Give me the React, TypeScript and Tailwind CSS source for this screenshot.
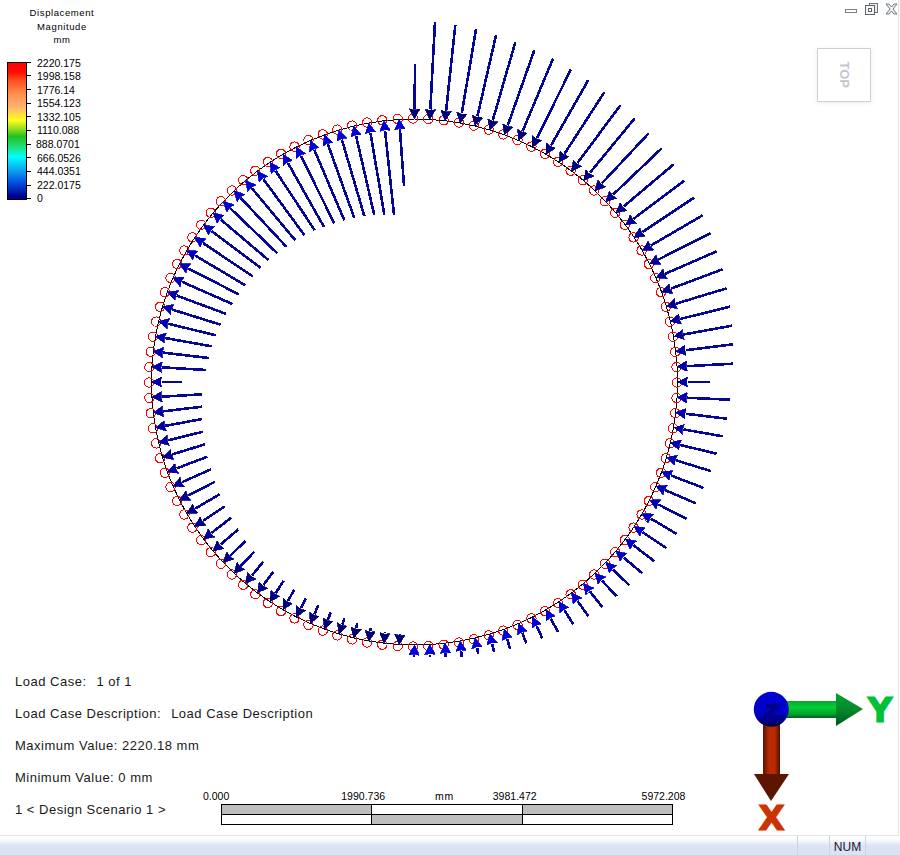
import React from 'react';

// arrow tails, clockwise from the top node of the ring
const TAILS: [number, number][] = [
  [415, 64], [435, 21.7], [455.3, 25.3], [476, 29.3], [496, 35.3], [515.3, 42.3], [534.3, 50.3], [553, 58.7], [571, 69.3],
  [588.3, 80], [604.3, 92.3], [620.3, 105.3], [634.7, 118.3], [648.7, 133.3], [661.7, 148.3], [673.7, 164.3], [684.3, 180.7],
  [694, 197.7], [702.7, 215.3], [710.7, 233.3], [716.7, 251.3], [722.7, 269.3], [726.7, 288.3], [730, 306.7], [732, 325.7],
  [733, 344.3], [733, 363.7], [709.7, 382], [730, 399.7], [726.7, 418.7], [722.7, 436.3], [716.7, 453.7], [710.7, 471],
  [703.7, 488], [695.7, 503.3], [686.7, 518.7], [676.7, 534], [666.3, 548], [654.3, 561.3], [642.3, 573.3], [629.3, 585.3],
  [616.7, 596.3], [602.3, 607], [588.3, 616], [573.3, 624.3], [558, 632], [542.3, 638.3], [526.3, 643.3], [510, 648.7],
  [494, 652], [478.3, 654.3], [461.7, 656.7], [445.7, 656.7], [430, 656.7], [414, 656.7], [400, 634.3], [385, 632.3],
  [370.7, 628.3], [357.3, 623.3], [344.3, 618.3], [330.7, 612.3], [318.3, 605.3], [306, 598.3], [294.3, 589.7], [283.7, 580.7],
  [273.3, 571.7], [263.3, 561.7], [254.3, 551.7], [245.7, 540.7], [238.3, 529.3], [231.3, 517.7], [224.7, 506.3], [219.7, 494.3],
  [215, 481.7], [211, 469.3], [207.3, 456.7], [205, 444.3], [203.3, 431.7], [202.3, 419], [202, 406.7], [202.3, 394.3],
  [181.7, 382], [205.7, 370], [208.7, 358], [211.7, 346.3], [215.7, 335.3], [220.7, 324.7], [226.3, 314], [232.3, 304],
  [238.7, 294.3], [245.3, 285.3], [252.7, 276.3], [260.7, 268], [268.7, 260.3], [277.3, 253.3], [286.3, 246.7], [295.3, 240.3],
  [304.3, 235], [314.7, 230.3], [324, 227], [334.3, 223.3], [344.3, 220.3], [354.3, 218], [364.3, 216], [374.3, 215.3],
  [384.3, 214.7], [394, 214.7], [404, 185.7],
];

const LEGEND = ['2220.175', '1998.158', '1776.14', '1554.123', '1332.105', '1110.088', '888.0701', '666.0526', '444.0351', '222.0175', '0'];

const ring = TAILS.map((_, i) => {
  const a = (i * Math.PI * 2) / TAILS.length;
  return { sin: Math.sin(a), cos: Math.cos(a) };
});

const Ring = () => (
  <svg className="absolute inset-0" width={899} height={835} shapeRendering="crispEdges">
    <polygon
      points={ring.map((p) => `${414.5 + 263 * p.sin},${382 - 263 * p.cos}`).join(' ')}
      fill="none"
      stroke="#000"
      strokeWidth={1}
    />
    {ring.map((p, i) => (
      <circle key={i} cx={413 + 264 * p.sin} cy={382.5 - 264 * p.cos} r={4.7} fill="none" stroke="#ff0000" strokeWidth={1} />
    ))}
    {ring.map((p, i) => {
      const tip = [414.5 + 263 * p.sin, 382 - 263 * p.cos];
      const [tx, ty] = TAILS[i];
      const len = Math.hypot(tip[0] - tx, tip[1] - ty);
      const ux = (tip[0] - tx) / len;
      const uy = (tip[1] - ty) / len;
      const bx = tip[0] - ux * 10;
      const by = tip[1] - uy * 10;
      const blue = Math.round(170 - uy * 50);
      return (
        <g key={i}>
          <line x1={tx} y1={ty} x2={bx} y2={by} stroke="#050596" strokeWidth={2.6} />
          <polygon
            points={`${tip[0]},${tip[1]} ${bx - uy * 5.2},${by + ux * 5.2} ${bx + ux * 1},${by + uy * 1} ${bx + uy * 5.2},${by - ux * 5.2}`}
            fill={`rgb(0,0,${blue})`}
            stroke={`rgb(0,0,${blue})`}
            strokeWidth={0.8}
          />
        </g>
      );
    })}
  </svg>
);

const Legend = () => (
  <div className="w-[125px] pl-[7px]">
    <div className="w-[110px] pt-[6px] text-center text-[9.5px] leading-[13.5px] tracking-[0.6px] text-black">
      <div>Displacement</div>
      <div>Magnitude</div>
      <div>mm</div>
    </div>
    <div className="mt-[10px] flex items-center">
      <div className="h-[138px] w-[20px] border border-black bg-[linear-gradient(to_bottom,#ff0000_0%,#ff1000_7%,#ff5020_13%,#ff9050_23%,#ffb070_32%,#ffff20_42%,#a0e020_48%,#20c020_54%,#20e080_62%,#00ffff_69%,#10a0f0_79%,#0050e0_88%,#000090_98%)]" />
      <div className="flex h-[138px] w-[4px] flex-col justify-between">
        {LEGEND.map((v) => (
          <div key={v} className="h-px bg-black" />
        ))}
      </div>
      <div className="ml-[6px] flex h-[148px] flex-col justify-between text-[10.5px] leading-[12px] text-black">
        {LEGEND.map((v) => (
          <div key={v} className={v === '888.0701' ? '-ml-px' : ''}>{v}</div>
        ))}
      </div>
    </div>
  </div>
);

const WindowButtons = () => (
  <svg width={56} height={16} viewBox="0 0 56 16" className="mt-[1px]">
    <rect x={3.5} y={8.5} width={11} height={3} fill="#fff" stroke="#7b8087" />
    <rect x={27.5} y={2.5} width={8} height={9} fill="#e8ecf0" stroke="#6f747b" />
    <rect x={23.5} y={4.5} width={9} height={9} fill="#f4f6f8" stroke="#5f646b" />
    <rect x={26.5} y={7.5} width={3} height={3} fill="#fff" stroke="#5f646b" />
    <path d="M44 3h3l2.5 3 2.5-3h3l-4 5 4 5h-3l-2.5-3-2.5 3h-3l4-5z" fill="#f2f4f6" stroke="#6f747b" strokeWidth={1} />
  </svg>
);

const Triad = () => (
  <svg width={149} height={150} viewBox="750 685 149 150" className="ml-auto shrink-0 overflow-visible">
    <defs>
      <linearGradient id="gShaft" x1="0" y1="0" x2="0" y2="1">
        <stop offset="0" stopColor="#07a52f" />
        <stop offset="0.35" stopColor="#02d035" />
        <stop offset="0.75" stopColor="#03a62c" />
        <stop offset="1" stopColor="#045f1c" />
      </linearGradient>
      <linearGradient id="gHead" x1="0" y1="0" x2="0" y2="1">
        <stop offset="0" stopColor="#03a232" />
        <stop offset="0.5" stopColor="#048a2a" />
        <stop offset="1" stopColor="#03551a" />
      </linearGradient>
      <linearGradient id="rShaft" x1="0" y1="0" x2="1" y2="0">
        <stop offset="0" stopColor="#5a1204" />
        <stop offset="0.35" stopColor="#b82a00" />
        <stop offset="0.7" stopColor="#b82a00" />
        <stop offset="1" stopColor="#4e1004" />
      </linearGradient>
      <linearGradient id="ball" x1="0" y1="0" x2="0" y2="1">
        <stop offset="0" stopColor="#0000d8" />
        <stop offset="0.7" stopColor="#0000c0" />
        <stop offset="0.88" stopColor="#000070" />
        <stop offset="1" stopColor="#00003c" />
      </linearGradient>
    </defs>
    <rect x={787} y={701} width={51} height={17} fill="url(#gShaft)" />
    <polygon points="837,693 837,726 864,709" fill="url(#gHead)" />
    <rect x={764} y={724} width={17} height={52} fill="url(#rShaft)" />
    <polygon points="755,774 790,774 772,801" fill="#5c1500" />
    <circle cx={772.3} cy={709.3} r={17.5} fill="url(#ball)" />
    <path d="M767 704h12l1 4-8 7h14l-3 5h-18l-1-4 9-8h-6z" fill="#00008a" />
    <text x={881} y={722} textAnchor="middle" fontFamily="'DejaVu Sans', sans-serif" fontWeight={700} fontSize={34} fill="#00c038" stroke="#00c038" strokeWidth={1.2}>Y</text>
    <text x={772.5} y={830} textAnchor="middle" fontFamily="'DejaVu Sans', sans-serif" fontWeight={700} fontSize={34} fill="#cc3300" stroke="#cc3300" strokeWidth={1.2}>X</text>
  </svg>
);

const ScaleBar = () => (
  <div className="mb-[10px] w-[483px] shrink-0 text-[10.5px] leading-[12px] text-black">
    <div className="flex whitespace-nowrap">
      <span>0.000</span>
      <span className="ml-[112px]">1990.736</span>
      <span className="ml-[50px] tracking-[0.6px]">mm</span>
      <span className="ml-[39px]">3981.472</span>
      <span className="ml-[105px]">5972.208</span>
    </div>
    <div className="ml-[18px] mt-[2px] grid h-[21px] w-[452px] grid-cols-[150px_151px_1fr] border border-black">
      <div className="border-b border-r border-black bg-[#bebebe]" />
      <div className="border-b border-r border-black bg-white" />
      <div className="border-b border-black bg-[#bebebe]" />
      <div className="border-r border-black bg-white" />
      <div className="border-r border-black bg-[#bebebe]" />
      <div className="bg-white" />
    </div>
  </div>
);

export default function App() {
  return (
    <div className="flex h-[855px] w-[900px] flex-col overflow-hidden bg-white font-['Liberation_Sans',sans-serif]">
      <main className="relative h-[836px] w-[899px] shrink-0 border-b border-r border-[#e4e4e4]">
        <Ring />
        <div className="relative flex h-full flex-col justify-between">
          <div className="flex justify-between">
            <Legend />
            <div className="flex flex-col items-end">
              <WindowButtons />
              <div className="mr-[27px] mt-[31px] flex h-[54px] w-[54px] items-center justify-center border border-[#cfcfcf] bg-white shadow-[0_1px_5px_rgba(0,0,0,0.08)]">
                <span className="rotate-90 text-[13px] font-bold text-[#c3c6ce]">TOP</span>
              </div>
            </div>
          </div>
          <div className="flex items-end">
            <div className="w-[203px] shrink-0 whitespace-nowrap pb-[9px] pl-[15px] text-[13px] leading-[32px] tracking-[0.5px] text-[#1a1a1a]">
              <div>Load Case:<span className="ml-[10px]">1 of 1</span></div>
              <div>Load Case Description:<span className="ml-[10px]">Load Case Description</span></div>
              <div>Maximum Value:&nbsp;2220.18 mm</div>
              <div>Minimum Value:&nbsp;0 mm</div>
              <div>1 &lt; Design Scenario 1 &gt;</div>
            </div>
            <ScaleBar />
            <Triad />
          </div>
        </div>
      </main>
      <footer className="flex flex-1 justify-end bg-[linear-gradient(to_bottom,#ffffff_0%,#ffffff_15%,#dce3f3_50%,#dbe2f2_100%)]">
        <div className="w-[32px] border-l border-[#cdd4e4]" />
        <div className="flex w-[36px] items-end justify-center border-l border-[#cdd4e4] text-[12px] leading-[16px] text-[#14142a]">NUM</div>
        <div className="w-[35px] border-l border-[#cdd4e4]" />
      </footer>
    </div>
  );
}
